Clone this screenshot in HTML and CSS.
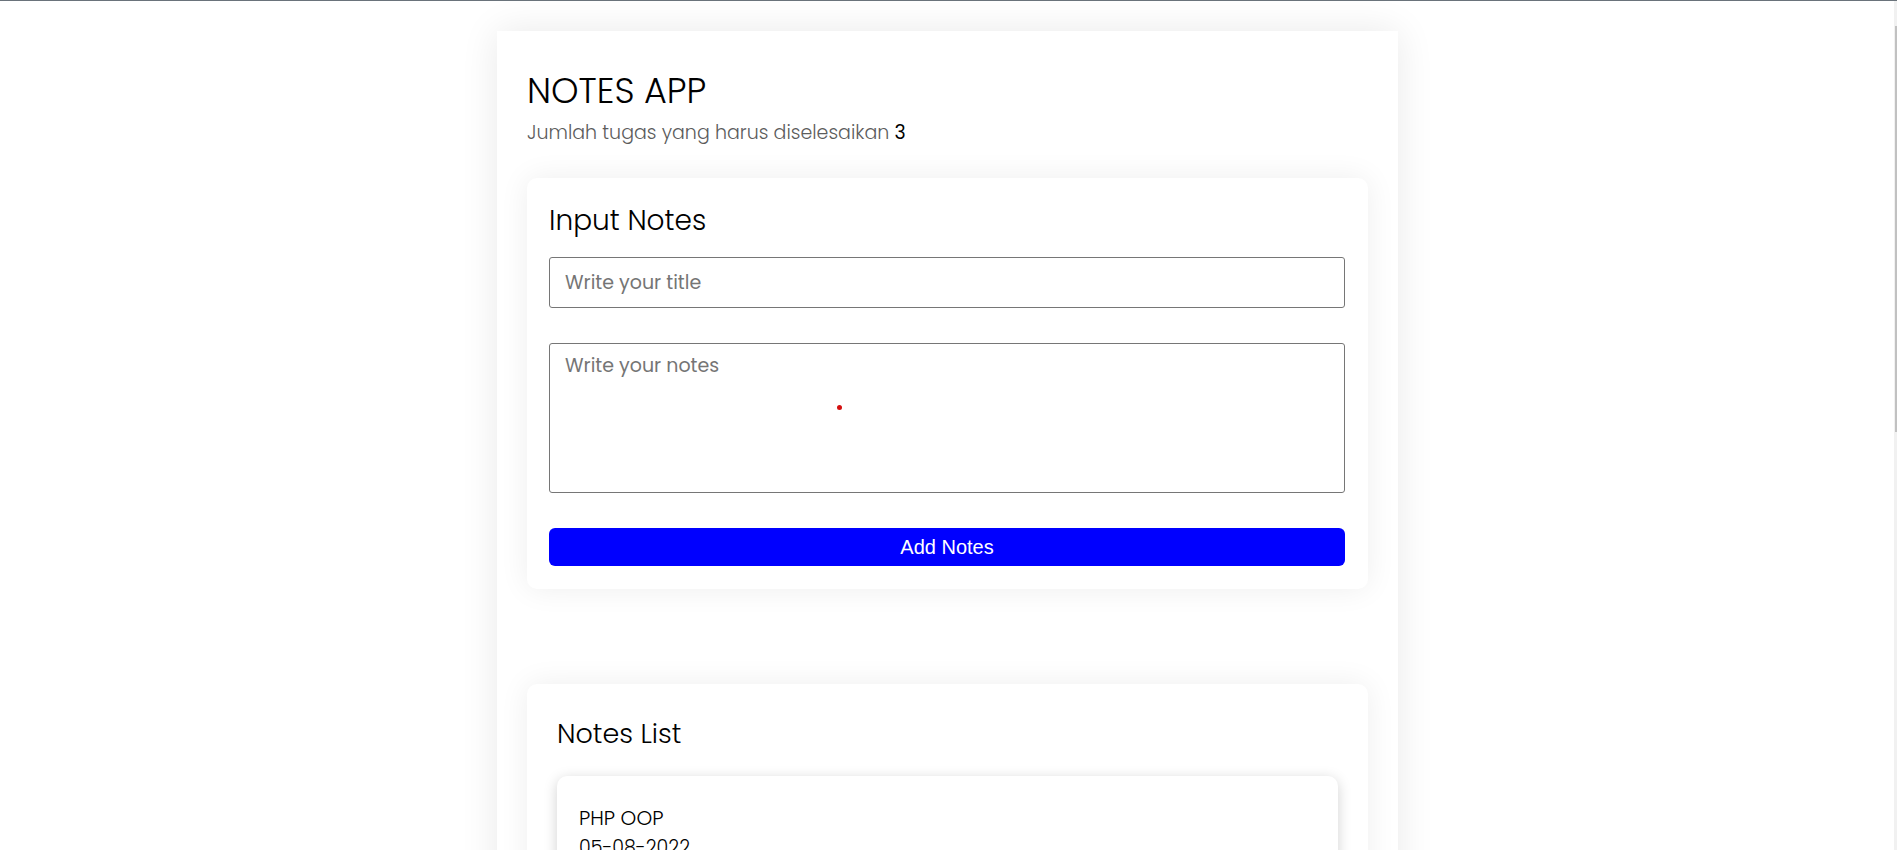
FILE: index.html
```html
<!DOCTYPE html>
<html lang="id">
<head>
<meta charset="utf-8">
<title>Notes App</title>
<link rel="stylesheet" href="styles.css">
</head>
<body>
<div class="scrollbar"><div class="scrollbar-thumb"></div></div>
<main class="app">
  <header class="app-header">
    <h1 class="app-title">NOTES APP</h1>
    <p class="app-count">Jumlah tugas yang harus diselesaikan <span class="count-num">3</span></p>
  </header>

  <section class="panel input-panel">
    <h2 class="panel-title">Input Notes</h2>
    <form class="note-form">
      <input class="field field-title" type="text" placeholder="Write your title">
      <div class="area-wrap">
        <textarea class="field field-body" placeholder="Write your notes"></textarea>
        <span class="cursor-dot"></span>
      </div>
      <button class="btn-add" type="button">Add Notes</button>
    </form>
  </section>

  <section class="panel list-panel">
    <h2 class="panel-title list-title">Notes List</h2>
    <div class="note-list">
      <article class="note-card">
        <h3 class="note-title">PHP OOP</h3>
        <p class="note-date">05-08-2022</p>
        <p class="note-body">Belajar konsep class, object, inheritance dan interface.</p>
      </article>
      <article class="note-card">
        <h3 class="note-title">JavaScript</h3>
        <p class="note-date">06-08-2022</p>
        <p class="note-body">Latihan DOM manipulation dan event handling.</p>
      </article>
      <article class="note-card">
        <h3 class="note-title">React</h3>
        <p class="note-date">07-08-2022</p>
        <p class="note-body">Membuat komponen dan mengelola state.</p>
      </article>
    </div>
  </section>
</main>
</body>
</html>
```

FILE: styles.css
```css
* { box-sizing: border-box; }

html, body {
  margin: 0;
  padding: 0;
  background: #ffffff;
}

body {
  border-top: 1px solid #6a737b;
  font-family: "Poppins", "Inter", "Open Sans", sans-serif;
  color: #000;
}

.scrollbar {
  position: fixed;
  top: 1px;
  right: 0;
  width: 3px;
  height: 849px;
  background: #f1f1f1;
}

.scrollbar-thumb {
  margin-top: 25px;
  margin-left: 1px;
  width: 2px;
  height: 406px;
  background: #c1c1c1;
}

.app {
  width: 901px;
  margin: 30px auto 0;
  padding: 37px 30px 40px;
  background: #fff;
  box-shadow: 0 0 36px rgba(0, 0, 0, 0.09);
  position: relative;
  left: -1px;
}

.app-header {
  padding-bottom: 33px;
}

.app-title {
  margin: 0;
  font-size: 35px;
  font-weight: 300;
  line-height: 46px;
}

.app-count {
  margin: 7px 0 0;
  font-size: 19px;
  line-height: 24px;
  font-weight: 300;
  color: #5c5c5c;
}

.count-num {
  color: #000;
  font-weight: 400;
}

.panel {
  background: #fff;
  border-radius: 10px;
  box-shadow: 0 0 30px rgba(0, 0, 0, 0.07);
  padding: 25px 23px 23px 22px;
}

.panel-title {
  margin: 0;
  font-size: 28px;
  font-weight: 300;
  line-height: 36px;
}

.note-form {
  margin-top: 18px;
  display: flex;
  flex-direction: column;
  gap: 35px;
}

.field {
  width: 100%;
  display: block;
  border: 1px solid #767676;
  border-radius: 3px;
  font-family: "Poppins", "Inter", "Open Sans", sans-serif;
  font-size: 19px;
  font-weight: 400;
  padding: 0 15px;
  color: #000;
  background: #fff;
  outline: none;
}

.field::placeholder {
  color: #757575;
}

.field-title {
  height: 51px;
}

.area-wrap {
  position: relative;
}

.field-body {
  height: 150px;
  padding-top: 8px;
  resize: none;
  line-height: 28px;
}

.cursor-dot {
  position: absolute;
  left: 288px;
  top: 62px;
  width: 5px;
  height: 5px;
  border-radius: 50%;
  background: #d40f0f;
}

.btn-add {
  height: 38px;
  border: none;
  border-radius: 6px;
  background: #0000ff;
  color: #fff;
  font-family: "Liberation Sans", Arial, sans-serif;
  font-size: 20px;
  cursor: pointer;
}

.list-panel {
  margin-top: 95px;
  padding: 32px 30px 30px;
}

.list-title {
  font-size: 27px;
}

.note-list {
  margin-top: 24px;
  display: flex;
  flex-direction: column;
  gap: 24px;
}

.note-card {
  background: #fff;
  border-radius: 10px;
  box-shadow: 0 3px 14px rgba(0, 0, 0, 0.18);
  padding: 27px 22px 22px;
}

.note-title {
  margin: 0;
  font-size: 20px;
  font-weight: 300;
  line-height: 30px;
}

.note-date {
  margin: 2px 0 0;
  font-size: 19px;
  line-height: 26px;
  font-weight: 300;
}

.note-body {
  margin: 12px 0 0;
  font-size: 16px;
  line-height: 24px;
  color: #333;
}
```
